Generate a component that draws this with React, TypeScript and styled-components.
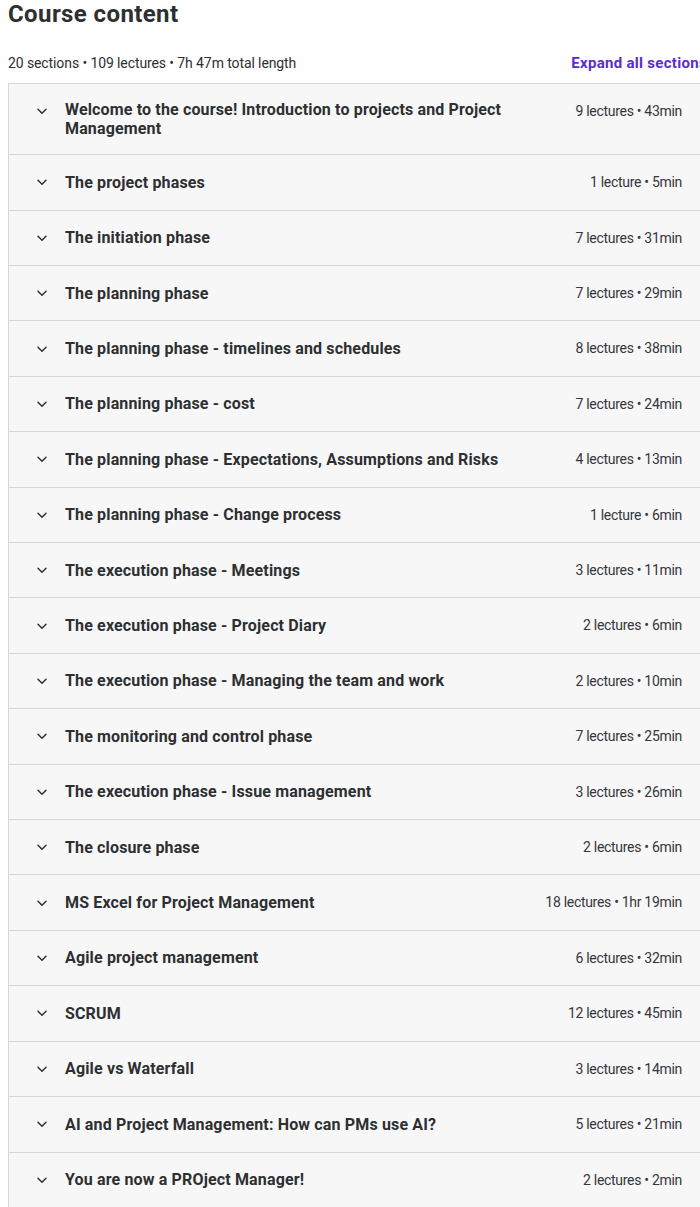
import React from "react";
import styled, { createGlobalStyle } from "styled-components";

const GlobalStyle = createGlobalStyle`
  html, body {
    margin: 0;
    padding: 0;
    overflow: hidden;
    background: #ffffff;
  }
  body {
    font-family: Roboto, "Liberation Sans", Arial, sans-serif;
    color: #2d2f31;
    -webkit-font-smoothing: antialiased;
  }
`;

const Page = styled.main`
  padding-left: 8px;
`;

const Wrapper = styled.section`
  width: 699px;
`;

const Heading = styled.h2`
  margin: 0 0 14px;
  font-size: 24px;
  font-weight: 700;
  line-height: 28.8px;
  letter-spacing: 0.4px;
  color: #2d2f31;
`;

const SummaryBar = styled.div`
  display: flex;
  align-items: center;
  justify-content: space-between;
  height: 40px;
`;

const Summary = styled.span`
  font-size: 14px;
  line-height: 22.4px;
  letter-spacing: -0.1px;
  color: #2d2f31;
`;

const ExpandButton = styled.button`
  border: none;
  background: none;
  padding: 0;
  margin: 0;
  font-family: inherit;
  font-size: 15px;
  font-weight: 700;
  letter-spacing: 0.3px;
  line-height: 22.4px;
  color: #5a2dcc;
  white-space: nowrap;
  cursor: pointer;
`;

const Sections = styled.div`
  border-top: 1px solid #d6d7db;
  border-left: 1px solid #d6d7db;
  border-right: 1px solid #d6d7db;
`;

const SectionRow = styled.div`
  display: flex;
  align-items: flex-start;
  padding: 16px 24px;
  background: #f7f7f8;
  border-bottom: 1px solid #d6d7db;
`;

const Toggle = styled.div`
  display: flex;
  align-items: flex-start;
  gap: 14px;
  flex: 1;
  min-width: 0;
`;

const IconBox = styled.span`
  display: flex;
  align-items: center;
  justify-content: center;
  width: 18px;
  height: 22.4px;
  flex-shrink: 0;
  color: #2d2f31;
`;

const Title = styled.h3`
  margin: 0;
  display: flex;
  align-items: center;
  min-height: 22.4px;
  font-size: 16px;
  font-weight: 700;
  line-height: 19.2px;
  letter-spacing: 0.15px;
  color: #2d2f31;
`;

const Meta = styled.span`
  margin-left: 32px;
  font-size: 14px;
  line-height: 22.4px;
  letter-spacing: -0.3px;
  white-space: nowrap;
  color: #34363a;
`;

const Chevron = () => (
  <svg width="16" height="16" viewBox="0 0 24 24" fill="none" aria-hidden="true">
    <path d="M6 9.5l6 6 6-6" stroke="currentColor" strokeWidth="2.2" strokeLinecap="round" strokeLinejoin="round" />
  </svg>
);

const sections: [string, string][] = [
  ["Welcome to the course! Introduction to projects and Project Management", "9 lectures • 43min"],
  ["The project phases", "1 lecture • 5min"],
  ["The initiation phase", "7 lectures • 31min"],
  ["The planning phase", "7 lectures • 29min"],
  ["The planning phase - timelines and schedules", "8 lectures • 38min"],
  ["The planning phase - cost", "7 lectures • 24min"],
  ["The planning phase - Expectations, Assumptions and Risks", "4 lectures • 13min"],
  ["The planning phase - Change process", "1 lecture • 6min"],
  ["The execution phase - Meetings", "3 lectures • 11min"],
  ["The execution phase - Project Diary", "2 lectures • 6min"],
  ["The execution phase - Managing the team and work", "2 lectures • 10min"],
  ["The monitoring and control phase", "7 lectures • 25min"],
  ["The execution phase - Issue management", "3 lectures • 26min"],
  ["The closure phase", "2 lectures • 6min"],
  ["MS Excel for Project Management", "18 lectures • 1hr 19min"],
  ["Agile project management", "6 lectures • 32min"],
  ["SCRUM", "12 lectures • 45min"],
  ["Agile vs Waterfall", "3 lectures • 14min"],
  ["AI and Project Management: How can PMs use AI?", "5 lectures • 21min"],
  ["You are now a PROject Manager!", "2 lectures • 2min"],
];

export default function App() {
  return (
    <>
      <GlobalStyle />
      <Page>
        <Wrapper>
          <Heading>Course content</Heading>
          <SummaryBar>
            <Summary>20 sections • 109 lectures • 7h 47m total length</Summary>
            <ExpandButton type="button">Expand all sections</ExpandButton>
          </SummaryBar>
          <Sections>
            {sections.map(([title, meta]) => (
              <SectionRow key={title}>
                <Toggle>
                  <IconBox>
                    <Chevron />
                  </IconBox>
                  <Title>{title}</Title>
                </Toggle>
                <Meta>{meta}</Meta>
              </SectionRow>
            ))}
          </Sections>
        </Wrapper>
      </Page>
    </>
  );
}
